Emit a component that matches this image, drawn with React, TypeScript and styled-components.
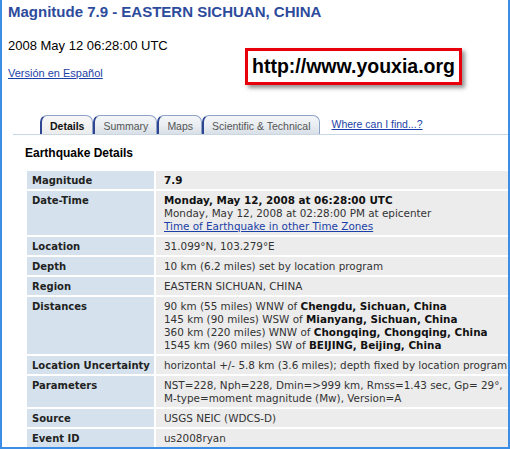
import React from 'react'
import styled, { createGlobalStyle } from 'styled-components'

const GlobalStyle = createGlobalStyle`
  html, body {
    margin: 0;
    padding: 0;
    background: #fff;
  }
`

const Frame = styled.div`
  width: 510px;
  height: 449px;
  box-sizing: border-box;
  border: 2px solid #3b8de6;
  border-top: none;
  overflow: hidden;
  font-family: 'Liberation Sans', Arial, sans-serif;
`

const Title = styled.h1`
  margin: 0;
  padding: 2px 0 0 6px;
  font-size: 15px;
  line-height: 19px;
  font-weight: bold;
  color: #2d4b9c;
`

const Header = styled.div`
  display: flex;
  justify-content: space-between;
  align-items: flex-start;
  padding-left: 6px;
`

const HeadLeft = styled.div`
  display: flex;
  flex-direction: column;
`

const DateLine = styled.div`
  margin-top: 17px;
  font-size: 13px;
  line-height: 16px;
  color: #000;
`

const Link = styled.a`
  color: #1b3fa6;
  text-decoration: underline;
  cursor: pointer;
`

const LangLink = styled(Link)`
  margin-top: 12px;
  font-size: 11px;
  line-height: 14px;
`

const UrlBox = styled.div`
  margin: 27px 46px 0 0;
  border: 3px solid #e8000b;
  padding: 2px 4px 3px 4px;
  font-size: 19.5px;
  line-height: 26px;
  font-weight: bold;
  color: #000;
  box-shadow: 3px 3px 4px rgba(60, 60, 60, 0.55);
`

const TabBar = styled.div`
  display: flex;
  align-items: flex-end;
  margin: 28px 0 0 11px;
  padding-left: 27px;
  border-bottom: 1px solid #c9d6e3;
  height: 21px;
`

const Tab = styled.div<{ $active?: boolean }>`
  height: 19px;
  box-sizing: border-box;
  padding: 3px 8px 0 8px;
  border: 1px solid #8fa3c8;
  border-left: 2px solid #2e4592;
  border-bottom: none;
  border-radius: 7px 7px 0 0;
  font-size: 10.5px;
  line-height: 14px;
  color: ${p => (p.$active ? '#111' : '#555')};
  font-weight: ${p => (p.$active ? 'bold' : 'normal')};
  background: ${p =>
    p.$active
      ? 'linear-gradient(#f7f7f7, #ececec)'
      : 'linear-gradient(#f4f6f8 0%, #e9edf1 55%, #d8dfe6 100%)'};
`

const TabLink = styled(Link)`
  margin: 0 0 3px 12px;
  font-size: 10.5px;
  line-height: 14px;
`

const SectionTitle = styled.h2`
  margin: 11px 0 0 23px;
  font-size: 12px;
  line-height: 15px;
  font-weight: bold;
  color: #000;
`

const Table = styled.div`
  display: grid;
  grid-template-columns: 127px 1fr;
  gap: 2px;
  margin: 10px 0 0 25px;
  font-family: 'DejaVu Sans', Verdana, sans-serif;
  font-size: 10px;
  line-height: 13px;
`

const Label = styled.div`
  background: #d5e2ed;
  padding: 3px 4px 2px 5px;
  font-weight: bold;
  color: #222;
  white-space: nowrap;
`

const Value = styled.div`
  background: #ececec;
  padding: 3px 0 2px 8px;
  font-size: 10.4px;
  color: #333;
  white-space: nowrap;
`

const Strong = styled.b`
  color: #111;
`

const rows: [string, React.ReactNode][] = [
  ['Magnitude', <Strong>7.9</Strong>],
  [
    'Date-Time',
    <>
      <Strong>Monday, May 12, 2008 at 06:28:00 UTC</Strong>
      <br />
      Monday, May 12, 2008 at 02:28:00 PM at epicenter
      <br />
      <Link>Time of Earthquake in other Time Zones</Link>
    </>,
  ],
  ['Location', '31.099°N, 103.279°E'],
  ['Depth', '10 km (6.2 miles) set by location program'],
  ['Region', 'EASTERN SICHUAN, CHINA'],
  [
    'Distances',
    <>
      90 km (55 miles) WNW of <Strong>Chengdu, Sichuan, China</Strong>
      <br />
      145 km (90 miles) WSW of <Strong>Mianyang, Sichuan, China</Strong>
      <br />
      360 km (220 miles) WNW of <Strong>Chongqing, Chongqing, China</Strong>
      <br />
      1545 km (960 miles) SW of <Strong>BEIJING, Beijing, China</Strong>
    </>,
  ],
  ['Location Uncertainty', 'horizontal +/- 5.8 km (3.6 miles); depth fixed by location program'],
  [
    'Parameters',
    <>
      NST=228, Nph=228, Dmin=&gt;999 km, Rmss=1.43 sec, Gp= 29°,
      <br />
      M-type=moment magnitude (Mw), Version=A
    </>,
  ],
  ['Source', 'USGS NEIC (WDCS-D)'],
  ['Event ID', 'us2008ryan'],
]

export default function App() {
  return (
    <>
      <GlobalStyle />
      <Frame>
        <Title>Magnitude 7.9 - EASTERN SICHUAN, CHINA</Title>
        <Header>
          <HeadLeft>
            <DateLine>2008 May 12 06:28:00 UTC</DateLine>
            <LangLink>Versión en Español</LangLink>
          </HeadLeft>
          <UrlBox>http://www.youxia.org</UrlBox>
        </Header>
        <TabBar>
          <Tab $active>Details</Tab>
          <Tab>Summary</Tab>
          <Tab>Maps</Tab>
          <Tab>Scientific &amp; Technical</Tab>
          <TabLink>Where can I find...?</TabLink>
        </TabBar>
        <SectionTitle>Earthquake Details</SectionTitle>
        <Table>
          {rows.map(([label, value]) => (
            <React.Fragment key={label}>
              <Label>{label}</Label>
              <Value>{value}</Value>
            </React.Fragment>
          ))}
        </Table>
      </Frame>
    </>
  )
}
